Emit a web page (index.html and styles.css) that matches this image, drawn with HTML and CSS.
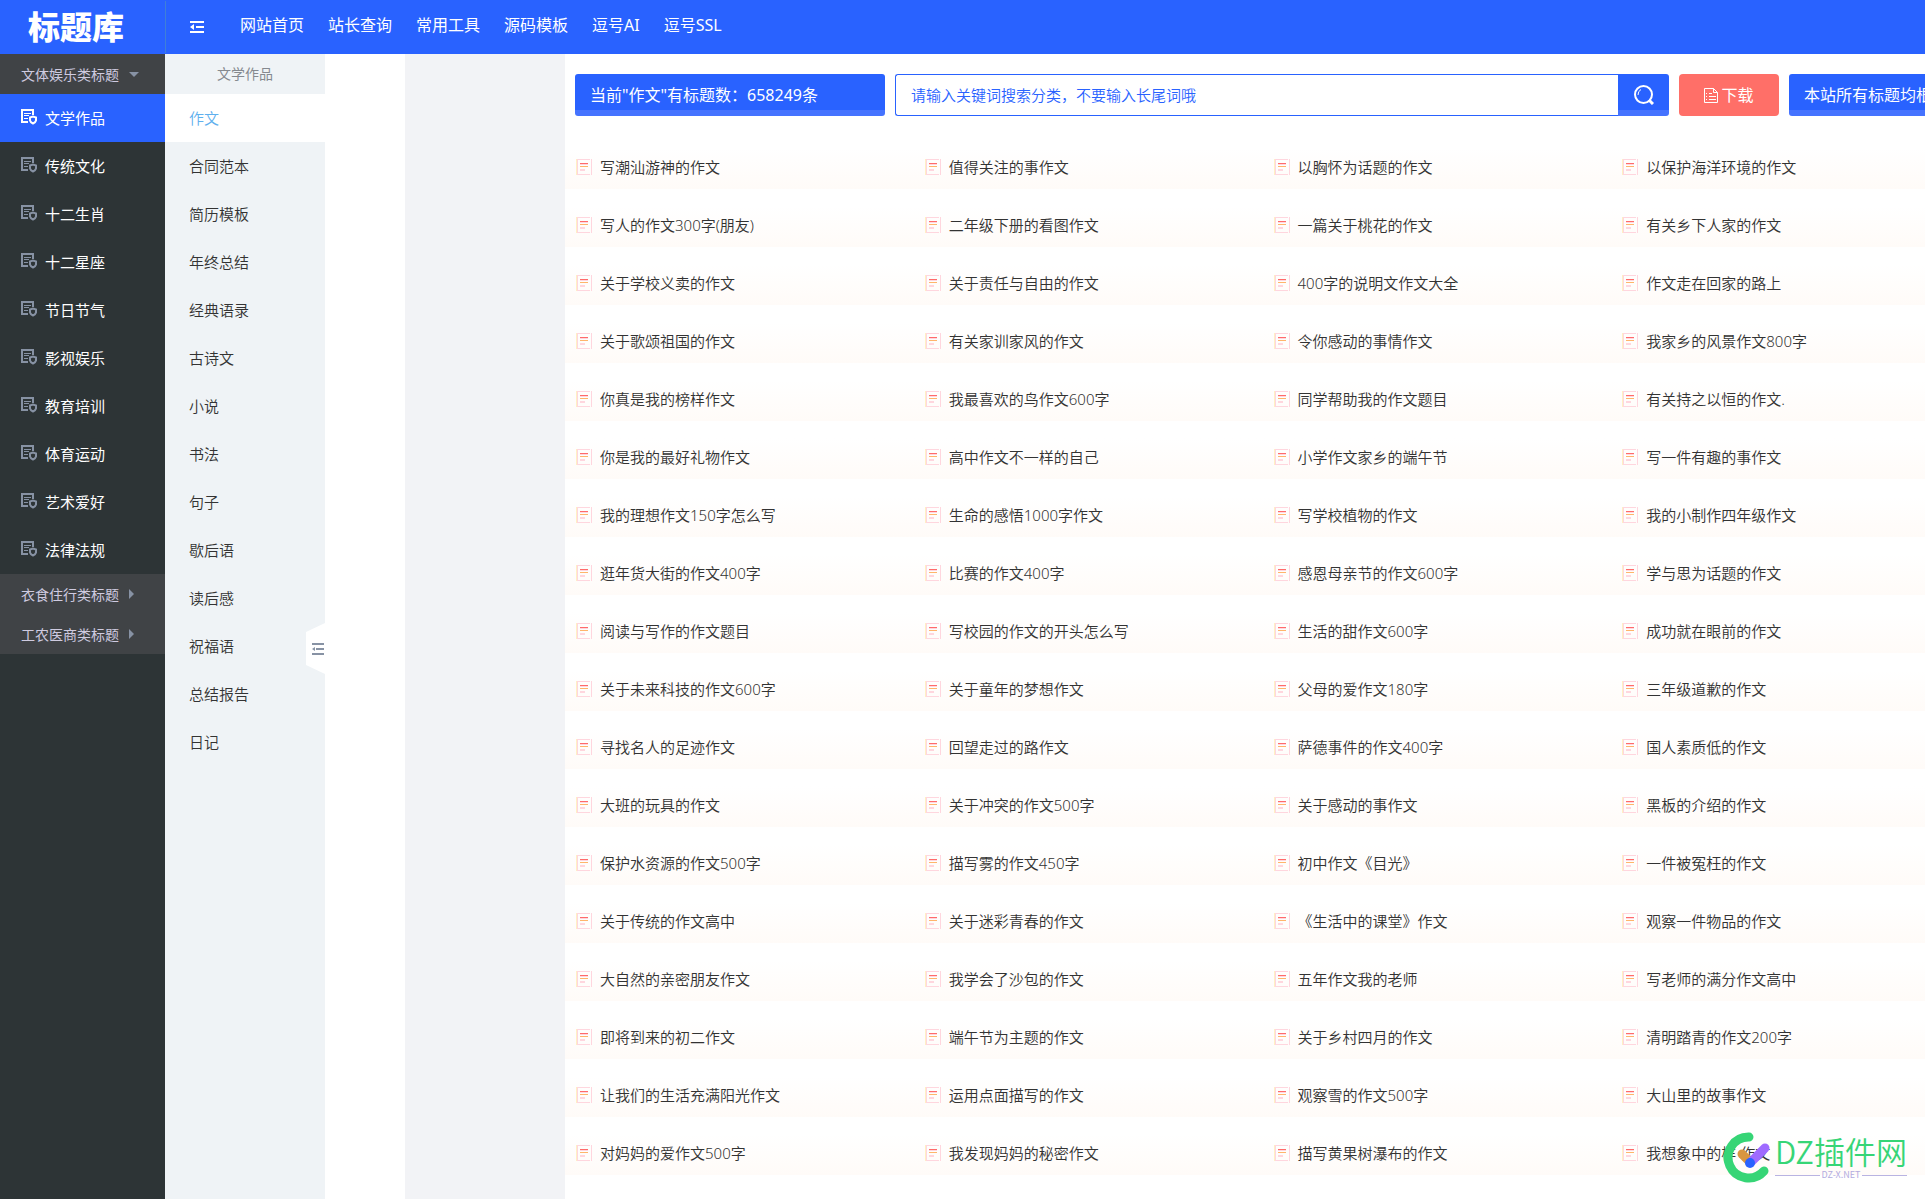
FILE: index.html
```
<!DOCTYPE html>
<html lang="zh-CN">
<head>
	<meta charset="utf-8"/>
	<title>标题库</title>
	<link rel="stylesheet" href="styles.css">
</head>
<body>
	<!-- 图标 -->
	<svg class="symbols" aria-hidden="true">
		<symbol id="doc" viewBox="0 0 16 16">
			<path fill="currentColor" d="M0 0h13v6h-2V2H2v10h5v2H0z"/>
			<path fill="currentColor" d="M3 4h7v1H3zM3 6h5v1H3zM3 9h4v1H3z"/>
			<path fill="none" stroke="currentColor" stroke-width="2" d="M9 8.500l3-1 3 1v3q-.5 2-3 3-2.500-1-3-3z"/>
		</symbol>
		<symbol id="note" viewBox="0 0 16 16">
			<path fill="#ffd6de" d="M1 0h13v1H1zM1 15h13v1H1zM15 0h1v16h-1zM1 0h1v16H1z"/>
			<path fill="#fff0c4" d="M0 0h1v16H0z"/>
			<path fill="#ff6b6b" d="M4 4h8v1H4z"/>
			<path fill="#ffd6de" d="M4 5h8v1H4zM4 10h5v2H4z"/>
			<path fill="#ffb56b" d="M4 7h8v1H4z"/>
		</symbol>
		<symbol id="fold" viewBox="0 0 14 12">
			<path fill="currentColor" d="M0 0h14v2H0zM6 5h8v2H6zM0 10h14v2H0zM4 3v6L0 6z"/>
		</symbol>
	</svg>

	<header class="header">
		<h1 class="logo">标题库</h1>
		<button class="fold" type="button" aria-label="折叠菜单"><svg width="14" height="12"><use href="#fold"/></svg></button>
		<nav class="nav">
			<a href="#">网站首页</a>
			<a href="#">站长查询</a>
			<a href="#">常用工具</a>
			<a href="#">源码模板</a>
			<a href="#">逗号AI</a>
			<a href="#">逗号SSL</a>
		</nav>
	</header>

	<div class="wrap">
		<nav class="side">
			<button class="group open" type="button">文体娱乐类标题</button>
			<a class="on" href="#"><svg><use href="#doc"/></svg>文学作品</a>
			<a href="#"><svg><use href="#doc"/></svg>传统文化</a>
			<a href="#"><svg><use href="#doc"/></svg>十二生肖</a>
			<a href="#"><svg><use href="#doc"/></svg>十二星座</a>
			<a href="#"><svg><use href="#doc"/></svg>节日节气</a>
			<a href="#"><svg><use href="#doc"/></svg>影视娱乐</a>
			<a href="#"><svg><use href="#doc"/></svg>教育培训</a>
			<a href="#"><svg><use href="#doc"/></svg>体育运动</a>
			<a href="#"><svg><use href="#doc"/></svg>艺术爱好</a>
			<a href="#"><svg><use href="#doc"/></svg>法律法规</a>
			<button class="group" type="button">衣食住行类标题</button>
			<button class="group" type="button">工农医商类标题</button>
		</nav>

		<nav class="sub">
			<h2>文学作品</h2>
			<a class="on" href="#">作文</a>
			<a href="#">合同范本</a>
			<a href="#">简历模板</a>
			<a href="#">年终总结</a>
			<a href="#">经典语录</a>
			<a href="#">古诗文</a>
			<a href="#">小说</a>
			<a href="#">书法</a>
			<a href="#">句子</a>
			<a href="#">歇后语</a>
			<a href="#">读后感</a>
			<a href="#">祝福语</a>
			<a href="#">总结报告</a>
			<a href="#">日记</a>
			<button class="handle" type="button" aria-label="收起分类"><svg width="12" height="12" viewBox="0 0 12 12"><path fill="currentColor" d="M0 0h12v2H0zM4 5h8v2H4zM0 10h12v2H0zM3 4v4L0 6z"/></svg></button>
		</nav>

		<div class="blank"></div>

		<main class="main">
			<form class="bar">
				<p class="count">当前"作文"有标题数：658249条</p>
				<div class="search">
					<input type="text" aria-label="搜索分类" placeholder="请输入关键词搜索分类，不要输入长尾词哦">
					<button type="button" aria-label="搜索">
						<svg width="20" height="20" viewBox="0 0 20 20" fill="none" stroke="#fff">
							<circle cx="9.500" cy="9.500" r="8.500" stroke-width="2"/>
							<path d="M4 10q0-4 3-5.500"/>
							<path stroke-width="3" d="M15 15l4 4"/>
						</svg>
					</button>
				</div>
				<button class="down" type="button">
					<svg width="14" height="15" viewBox="0 0 14 15" fill="none" stroke="#fff">
						<path d="M.5.500h9l4 4v10H.5zM9.500.500v4h4M2 5.500h1M5 5.500h3M2 8.500h1M5 8.500h7M2 11.500h1M5 11.500h7"/>
					</svg>下载
				</button>
				<p class="tip">本站所有标题均根</p>
			</form>

			<ul class="list">
				<li><a href="#"><svg><use href="#note"/></svg>写潮汕游神的作文</a></li>
				<li><a href="#"><svg><use href="#note"/></svg>值得关注的事作文</a></li>
				<li><a href="#"><svg><use href="#note"/></svg>以胸怀为话题的作文</a></li>
				<li><a href="#"><svg><use href="#note"/></svg>以保护海洋环境的作文</a></li>
				<li><a href="#"><svg><use href="#note"/></svg>写人的作文300字(朋友)</a></li>
				<li><a href="#"><svg><use href="#note"/></svg>二年级下册的看图作文</a></li>
				<li><a href="#"><svg><use href="#note"/></svg>一篇关于桃花的作文</a></li>
				<li><a href="#"><svg><use href="#note"/></svg>有关乡下人家的作文</a></li>
				<li><a href="#"><svg><use href="#note"/></svg>关于学校义卖的作文</a></li>
				<li><a href="#"><svg><use href="#note"/></svg>关于责任与自由的作文</a></li>
				<li><a href="#"><svg><use href="#note"/></svg>400字的说明文作文大全</a></li>
				<li><a href="#"><svg><use href="#note"/></svg>作文走在回家的路上</a></li>
				<li><a href="#"><svg><use href="#note"/></svg>关于歌颂祖国的作文</a></li>
				<li><a href="#"><svg><use href="#note"/></svg>有关家训家风的作文</a></li>
				<li><a href="#"><svg><use href="#note"/></svg>令你感动的事情作文</a></li>
				<li><a href="#"><svg><use href="#note"/></svg>我家乡的风景作文800字</a></li>
				<li><a href="#"><svg><use href="#note"/></svg>你真是我的榜样作文</a></li>
				<li><a href="#"><svg><use href="#note"/></svg>我最喜欢的鸟作文600字</a></li>
				<li><a href="#"><svg><use href="#note"/></svg>同学帮助我的作文题目</a></li>
				<li><a href="#"><svg><use href="#note"/></svg>有关持之以恒的作文.</a></li>
				<li><a href="#"><svg><use href="#note"/></svg>你是我的最好礼物作文</a></li>
				<li><a href="#"><svg><use href="#note"/></svg>高中作文不一样的自己</a></li>
				<li><a href="#"><svg><use href="#note"/></svg>小学作文家乡的端午节</a></li>
				<li><a href="#"><svg><use href="#note"/></svg>写一件有趣的事作文</a></li>
				<li><a href="#"><svg><use href="#note"/></svg>我的理想作文150字怎么写</a></li>
				<li><a href="#"><svg><use href="#note"/></svg>生命的感悟1000字作文</a></li>
				<li><a href="#"><svg><use href="#note"/></svg>写学校植物的作文</a></li>
				<li><a href="#"><svg><use href="#note"/></svg>我的小制作四年级作文</a></li>
				<li><a href="#"><svg><use href="#note"/></svg>逛年货大街的作文400字</a></li>
				<li><a href="#"><svg><use href="#note"/></svg>比赛的作文400字</a></li>
				<li><a href="#"><svg><use href="#note"/></svg>感恩母亲节的作文600字</a></li>
				<li><a href="#"><svg><use href="#note"/></svg>学与思为话题的作文</a></li>
				<li><a href="#"><svg><use href="#note"/></svg>阅读与写作的作文题目</a></li>
				<li><a href="#"><svg><use href="#note"/></svg>写校园的作文的开头怎么写</a></li>
				<li><a href="#"><svg><use href="#note"/></svg>生活的甜作文600字</a></li>
				<li><a href="#"><svg><use href="#note"/></svg>成功就在眼前的作文</a></li>
				<li><a href="#"><svg><use href="#note"/></svg>关于未来科技的作文600字</a></li>
				<li><a href="#"><svg><use href="#note"/></svg>关于童年的梦想作文</a></li>
				<li><a href="#"><svg><use href="#note"/></svg>父母的爱作文180字</a></li>
				<li><a href="#"><svg><use href="#note"/></svg>三年级道歉的作文</a></li>
				<li><a href="#"><svg><use href="#note"/></svg>寻找名人的足迹作文</a></li>
				<li><a href="#"><svg><use href="#note"/></svg>回望走过的路作文</a></li>
				<li><a href="#"><svg><use href="#note"/></svg>萨德事件的作文400字</a></li>
				<li><a href="#"><svg><use href="#note"/></svg>国人素质低的作文</a></li>
				<li><a href="#"><svg><use href="#note"/></svg>大班的玩具的作文</a></li>
				<li><a href="#"><svg><use href="#note"/></svg>关于冲突的作文500字</a></li>
				<li><a href="#"><svg><use href="#note"/></svg>关于感动的事作文</a></li>
				<li><a href="#"><svg><use href="#note"/></svg>黑板的介绍的作文</a></li>
				<li><a href="#"><svg><use href="#note"/></svg>保护水资源的作文500字</a></li>
				<li><a href="#"><svg><use href="#note"/></svg>描写雾的作文450字</a></li>
				<li><a href="#"><svg><use href="#note"/></svg>初中作文《目光》</a></li>
				<li><a href="#"><svg><use href="#note"/></svg>一件被冤枉的作文</a></li>
				<li><a href="#"><svg><use href="#note"/></svg>关于传统的作文高中</a></li>
				<li><a href="#"><svg><use href="#note"/></svg>关于迷彩青春的作文</a></li>
				<li><a href="#"><svg><use href="#note"/></svg>《生活中的课堂》作文</a></li>
				<li><a href="#"><svg><use href="#note"/></svg>观察一件物品的作文</a></li>
				<li><a href="#"><svg><use href="#note"/></svg>大自然的亲密朋友作文</a></li>
				<li><a href="#"><svg><use href="#note"/></svg>我学会了沙包的作文</a></li>
				<li><a href="#"><svg><use href="#note"/></svg>五年作文我的老师</a></li>
				<li><a href="#"><svg><use href="#note"/></svg>写老师的满分作文高中</a></li>
				<li><a href="#"><svg><use href="#note"/></svg>即将到来的初二作文</a></li>
				<li><a href="#"><svg><use href="#note"/></svg>端午节为主题的作文</a></li>
				<li><a href="#"><svg><use href="#note"/></svg>关于乡村四月的作文</a></li>
				<li><a href="#"><svg><use href="#note"/></svg>清明踏青的作文200字</a></li>
				<li><a href="#"><svg><use href="#note"/></svg>让我们的生活充满阳光作文</a></li>
				<li><a href="#"><svg><use href="#note"/></svg>运用点面描写的作文</a></li>
				<li><a href="#"><svg><use href="#note"/></svg>观察雪的作文500字</a></li>
				<li><a href="#"><svg><use href="#note"/></svg>大山里的故事作文</a></li>
				<li><a href="#"><svg><use href="#note"/></svg>对妈妈的爱作文500字</a></li>
				<li><a href="#"><svg><use href="#note"/></svg>我发现妈妈的秘密作文</a></li>
				<li><a href="#"><svg><use href="#note"/></svg>描写黄果树瀑布的作文</a></li>
				<li><a href="#"><svg><use href="#note"/></svg>我想象中的样 作文</a></li>
			</ul>
		</main>
	</div>

	<div class="mark">
		<svg width="48" height="52" viewBox="0 0 48 52" fill="none" stroke-linecap="round">
			<path stroke="#36d576" stroke-width="9" d="M26 5a20.500 20.500 0 1 0 15 34"/>
			<path stroke="#d9963f" stroke-width="9" d="M19 22l7 7"/>
			<path stroke="#9f6bff" stroke-width="9" d="M42 16L29 29"/>
			<circle cx="27" cy="31" r="5" fill="#2962ff"/>
		</svg>
		<div class="mark-text">
			<strong>DZ插件网</strong>
			<span>DZ-X.NET</span>
		</div>
	</div>
</body>
</html>
```

FILE: styles.css
```
/*##### 初始化 #####*/
*{margin:0; padding:0; box-sizing:border-box;}
body{min-height:100vh; display:flex; flex-direction:column; position:relative; overflow:hidden; background-color:#fff; color:#333; font-family:"Noto Sans","Noto Sans CJK SC",sans-serif; font-size:15px;}
a{color:inherit; text-decoration:none;}
ul{list-style:none;}
button,input{border:0; background:none; font:inherit; color:inherit;}
button{cursor:pointer;}
svg{display:block; flex:none;}
.symbols{position:absolute; width:0; height:0;}

/*##### header #####*/
.header{height:54px; display:flex; align-items:center; background-color:#2962ff; color:#fff;}
.logo{width:166px; padding-left:28px; border-right:1px solid #3f7fd8; font-size:32px; line-height:52px; font-weight:900; white-space:nowrap;}
.fold{width:62px; height:54px; padding-left:24px;}
.nav{display:flex; height:54px; font-size:16px; line-height:50px;}
.nav a{padding:0 12px;}

/*##### wrap #####*/
.wrap{flex:1; display:flex;}

.side{flex:none; width:165px; background-color:#2d3436; color:#fff;}
.side a{display:flex; align-items:center; gap:8px; height:48px; padding:0 0 2px 21px;}
.side svg{width:16px; height:16px; color:#8792a4;}
.side .on{background-color:#2962ff;}
.side .on svg{color:#fff;}

.group{display:flex; align-items:center; gap:10px; width:100%; height:40px; padding-left:21px; background-color:#404346; color:#cfcbe0; font-size:14px;}
.group:after{content:""; border:5px solid transparent; border-left-color:#8792a4; border-right:0;}
.group.open:after{border:5px solid transparent; border-top-color:#8792a4; border-bottom:0;}

.sub{flex:none; width:160px; position:relative; background-color:#eff3f6;}
.sub h2{height:40px; font-size:14px; font-weight:400; line-height:40px; text-align:center; color:#85898f;}
.sub a{display:block; height:48px; padding-left:24px; line-height:48px; font-weight:350;}
.sub .on{background-color:#fff; color:#5fb0ee;}
.handle{position:absolute; top:569px; right:0; width:19px; height:51px; padding-left:6px; background-color:#fff; color:#8792a4; clip-path:polygon(0 9px,100% 0,100% 100%,0 42px);}

.blank{flex:none; width:160px; margin-left:80px; background-color:#f2f3f6;}

/*##### main #####*/
/* 右侧超出窗口35px */
.main{flex:1; min-width:0; margin-right:-35px; padding-top:20px;}
.bar{display:flex; gap:10px; height:42px; margin:0 10px 15px; font-size:16px; line-height:42px; color:#fff;}
.count,.tip,.search button{background:linear-gradient(#2962ff 36px,#4573ff 36px);}
.count{width:310px; padding-left:15px; border-radius:3px;}
.tip{width:161px; padding-left:15px; border-radius:3px; white-space:nowrap;}
.search{flex:1; display:flex;}
.search input{flex:1; min-width:0; padding-left:15px; border:1px solid #2962ff; border-right:0; border-radius:3px 0 0 3px; font-size:15px; font-weight:350; color:#2962ff;}
.search input::placeholder{color:#2962ff; opacity:1;}
.search button{display:flex; align-items:center; justify-content:center; width:51px; border-radius:0 3px 3px 0;}
.down{display:flex; align-items:center; justify-content:center; gap:3px; width:100px; border-radius:4px; background-color:#ff6f68;}

.list{display:grid; grid-template-columns:repeat(4,1fr); font-weight:350;}
.list li{height:58px; padding:15px 0 0 11px; background:linear-gradient(#fff 30%,#fffbf8);}
.list a{display:flex; align-items:center; gap:8px; height:40px;}
.list svg{width:16px; height:16px; margin-top:2px;}

/*##### 右下角标志 #####*/
.mark{position:absolute; right:18px; bottom:15px; display:flex; gap:4px;}
.mark-text{display:flex; flex-direction:column; font-family:"Noto Sans CJK SC",sans-serif; color:#36d576;}
.mark strong{font-size:31px; line-height:38px; font-weight:350;}
.mark span{display:flex; align-items:center; gap:2px; font-size:9px; line-height:10px; color:#b3acdf;}
.mark span:before,.mark span:after{content:""; flex:1; height:1px; background-color:#b9b4e2;}
```
